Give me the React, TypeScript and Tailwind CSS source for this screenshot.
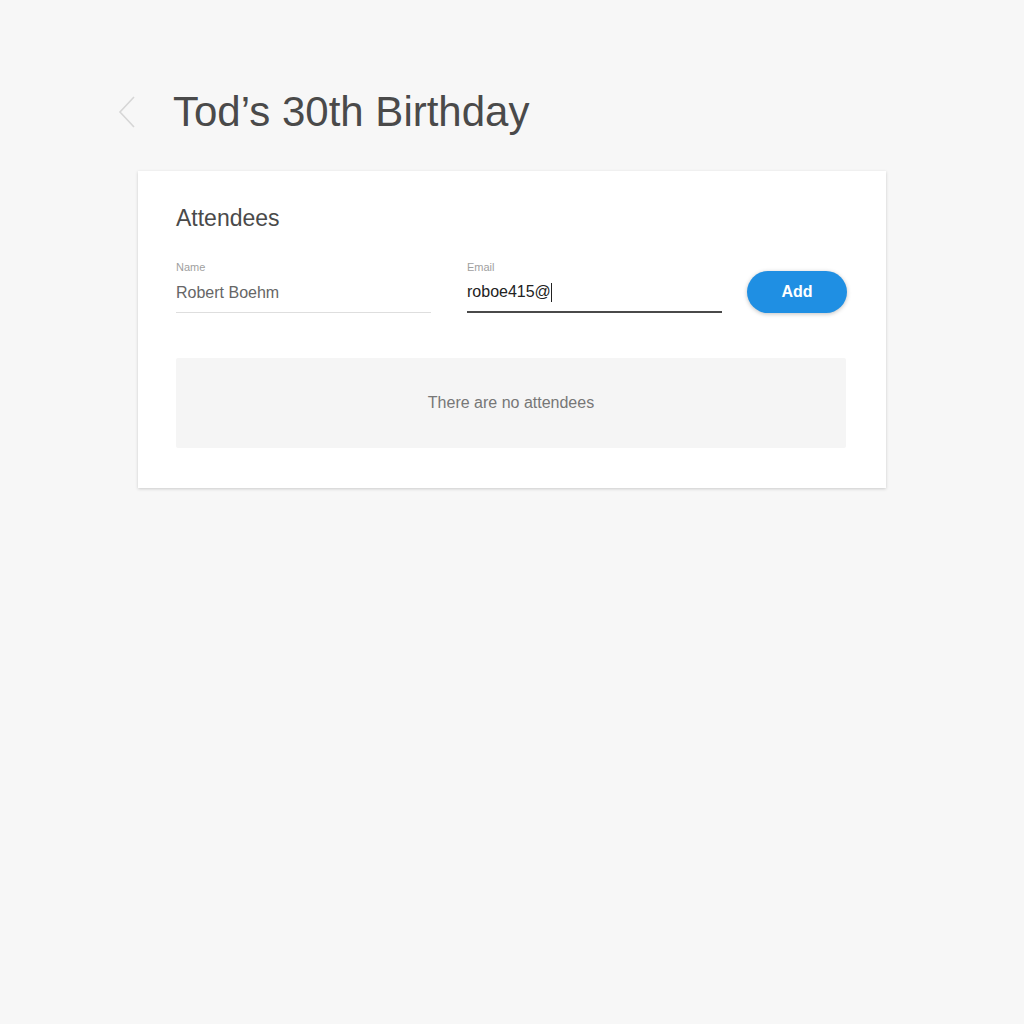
import { useState } from 'react';

export default function App() {
  const [name, setName] = useState('Robert Boehm');
  const [email, setEmail] = useState('roboe415@');

  return (
    <div className="min-h-screen w-full bg-[#f7f7f7] font-['Liberation_Sans',Arial,sans-serif]">
      <div className="pt-[87px] pl-[117px]">
        <div className="flex items-center">
          <button className="flex h-[50px] w-[20px] items-center justify-center text-[#d6d6d6]">
            <svg width="20" height="34" viewBox="0 0 20 34" fill="none">
              <path d="M17 2 L3 17 L17 32" stroke="currentColor" strokeWidth="1.6" />
            </svg>
          </button>
          <h1 className="ml-[36px] text-[42px] leading-[50px] text-[#4a4a4a]">Tod’s 30th Birthday</h1>
        </div>
      </div>

      <div className="ml-[138px] mt-[34px] w-[748px] bg-white pl-[38px] pr-[40px] pt-[33px] pb-[40px] shadow-[0_1px_3px_rgba(0,0,0,0.18)]">
        <h2 className="text-[23px] leading-[28px] text-[#4a4a4a]">Attendees</h2>

        <div className="mt-[28px] flex items-end">
          <label className="flex w-[255px] shrink-0 flex-col">
            <span className="text-[11px] leading-[14px] text-[#a0a0a0]">Name</span>
            <input
              value={name}
              onChange={e => setName(e.target.value)}
              className="h-[39px] border-b border-[#dedede] bg-transparent pb-[1px] text-[16px] text-[#666] outline-none"
            />
          </label>
          <label className="ml-[36px] flex w-[255px] shrink-0 flex-col">
            <span className="text-[11px] leading-[14px] text-[#a0a0a0]">Email</span>
            <div className="flex h-[39px] items-center border-b-2 border-[#4a4a4a] pb-[1px]">
              <input
                value={email}
                onChange={e => setEmail(e.target.value)}
                className="w-[84px] bg-transparent text-[16px] text-[#222] outline-none"
              />
              <span className="h-[19px] w-px bg-[#222]" />
            </div>
          </label>
          <button className="ml-[25px] h-[42px] w-[100px] shrink-0 rounded-full bg-[#1f8fe3] text-[16px] font-bold text-white shadow-[0_1px_4px_rgba(0,0,0,0.25)]">
            Add
          </button>
        </div>

        <div className="mt-[45px] flex h-[90px] items-center justify-center rounded-[2px] bg-[#f5f5f5] text-[16px] text-[#777]">
          There are no attendees
        </div>
      </div>
    </div>
  );
}
